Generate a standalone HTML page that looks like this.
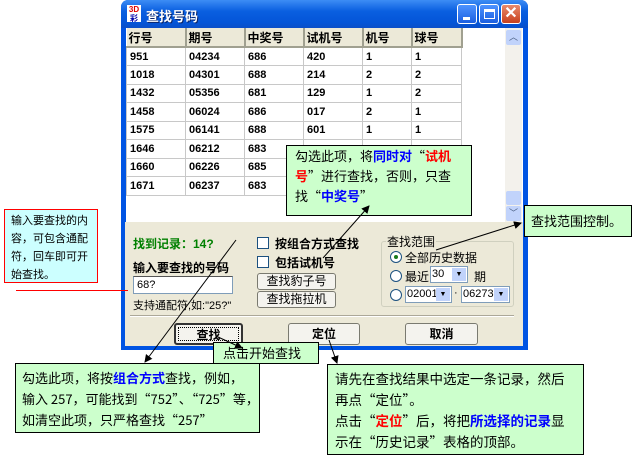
<!DOCTYPE html>
<html><head><meta charset="utf-8"><style>
*{margin:0;padding:0;box-sizing:border-box}
body{width:633px;height:456px;background:#fff;position:relative;overflow:hidden;font-family:"Liberation Sans","Noto Sans CJK SC",sans-serif;font-size:12px;color:#000}
.a{position:absolute}
.win{left:121px;top:0;width:407px;height:350px;background:#0054e3;border-radius:7px 7px 0 0}
.title{left:121px;top:0;width:407px;height:28px;border-radius:7px 7px 0 0;background:linear-gradient(#3d8df5,#0a5fe0 40%,#0455d8 80%,#0a4fc8)}
.tb{width:20px;height:20px;top:4px;border:1px solid #fff;border-radius:3px;background:linear-gradient(#4d93ff,#1c5fe0)}
.grid{left:126px;top:28px;width:397px;height:194px;background:#fff}
table{border-collapse:collapse;position:absolute;left:126px;top:28px;font-weight:bold;font-size:11px;font-family:"Liberation Sans","Noto Sans CJK SC",sans-serif}
td{height:18.5px;border:1px solid #c8c8c8;padding-left:3px;vertical-align:middle}
th{height:19px;background:#ece9d8;border-right:2px solid #a0a090;border-bottom:2px solid #a0a090;text-align:left;padding-left:2px;font-size:12px}
.panel{left:125px;top:222px;width:398px;height:124px;background:#ece9d8}
.btn{background:#f4f3ee;border:1px solid #7a7a70;border-radius:3px;text-align:center;font-size:12px}
.g{background:#ccffcc;border:1px solid #000;font-size:13px;line-height:20px;font-family:"Noto Sans CJK SC",sans-serif}
.b{color:#0000ff;font-weight:bold}.r{color:#ff0000;font-weight:bold}
.cb{width:12px;height:12px;border:1px solid #1c5180;background:#fff}
.rd{width:12px;height:12px;border:1px solid #1c5180;border-radius:50%;background:#fff}
.sel{height:17px;border:1px solid #7f9db9;background:#fff;font-size:11px;padding-left:1px;line-height:15px}
.dd{position:absolute;right:1px;top:1px;width:14px;height:13px;background:#c1d3fb;font-size:7px;text-align:center;line-height:13px}
</style></head><body>
<div class="a win"></div>
<div class="a title"></div>
<div class="a" style="left:127px;top:5px;width:14px;height:17px;background:#fff;font-size:8px;color:#d00;font-weight:bold;line-height:9px;text-align:center">3D<br><span style="color:#00a">彩</span></div>
<div class="a" style="left:146px;top:6px;color:#fff;font-weight:bold;font-size:13px;text-shadow:1px 1px #0a246a">查找号码</div>
<div class="a tb" style="left:457px"><div class="a" style="left:5px;top:12px;width:7px;height:3px;background:#fff"></div></div>
<div class="a tb" style="left:479px"><div class="a" style="left:4px;top:4px;width:11px;height:10px;border:1px solid #fff;border-top-width:3px"></div></div>
<div class="a tb" style="left:501px;background:linear-gradient(#e88a6c,#c8401c);color:#fff;font-weight:bold;font-size:16px;line-height:18px;text-align:center">✕</div>
<div class="a grid"></div>
<table>
<tr><th style="width:59px">行号</th><th style="width:59px">期号</th><th style="width:59px">中奖号</th><th style="width:59px">试机号</th><th style="width:49px">机号</th><th style="width:50px">球号</th></tr>
<tr><td>951</td><td>04234</td><td>686</td><td>420</td><td>1</td><td>1</td></tr>
<tr><td>1018</td><td>04301</td><td>688</td><td>214</td><td>2</td><td>2</td></tr>
<tr><td>1432</td><td>05356</td><td>681</td><td>129</td><td>1</td><td>2</td></tr>
<tr><td>1458</td><td>06024</td><td>686</td><td>017</td><td>2</td><td>1</td></tr>
<tr><td>1575</td><td>06141</td><td>688</td><td>601</td><td>1</td><td>1</td></tr>
<tr><td>1646</td><td>06212</td><td>683</td><td>&nbsp;</td><td>&nbsp;</td><td>&nbsp;</td></tr>
<tr><td>1660</td><td>06226</td><td>685</td><td>&nbsp;</td><td>&nbsp;</td><td>&nbsp;</td></tr>
<tr><td>1671</td><td>06237</td><td>683</td><td>&nbsp;</td><td>&nbsp;</td><td>&nbsp;</td></tr>
</table>
<div class="a" style="left:505px;top:28px;width:17px;height:194px;background:#f3f1ec"></div>
<div class="a" style="left:506px;top:30px;width:15px;height:15px;background:#c1d3fb;border-radius:2px;font-size:9px;text-align:center;color:#4d6185">︿</div>
<div class="a" style="left:506px;top:191px;width:15px;height:14px;background:#c1d3fb;border-radius:2px"></div>
<div class="a" style="left:506px;top:206px;width:15px;height:15px;background:#c1d3fb;border-radius:2px;font-size:9px;text-align:center;color:#4d6185">﹀</div>
<div class="a panel"></div>
<div class="a" style="left:133px;top:235px;color:#008000;font-weight:bold;font-size:12px">找到记录：14?</div>
<div class="a cb" style="left:257px;top:237px"></div><div class="a" style="left:275px;top:235px;font-weight:bold;font-size:12px">按组合方式查找</div>
<div class="a cb" style="left:257px;top:256px"></div><div class="a" style="left:275px;top:254px;font-weight:bold;font-size:12px">包括试机号</div>
<div class="a" style="left:133px;top:259px;font-weight:bold;font-size:12px">输入要查找的号码</div>
<div class="a" style="left:133px;top:276px;width:100px;height:18px;background:#fff;border:1px solid #7f9db9;border-top-color:#555;font-size:11px;padding:2px 3px">68?</div>
<div class="a" style="left:133px;top:297px;font-size:11px">支持通配符,如:"25?"</div>
<div class="a btn" style="left:257px;top:273px;width:79px;height:17px;line-height:15px">查找豹子号</div>
<div class="a btn" style="left:257px;top:291px;width:79px;height:17px;line-height:15px">查找拖拉机</div>
<div class="a" style="left:381px;top:241px;width:133px;height:66px;border:1px solid #d0d0bf;border-radius:3px"></div>
<div class="a" style="left:386px;top:233px;background:#ece9d8;padding:0 1px;font-size:12px">查找范围</div>
<div class="a rd" style="left:390px;top:251px"><div class="a" style="left:3px;top:3px;width:4px;height:4px;border-radius:50%;background:#1a7a1a"></div></div>
<div class="a" style="left:405px;top:249px;font-size:12px">全部历史数据</div>
<div class="a rd" style="left:390px;top:270px"></div>
<div class="a" style="left:405px;top:268px;font-size:12px">最近</div>
<div class="a sel" style="left:430px;top:266px;width:38px">30<div class="dd">▼</div></div>
<div class="a" style="left:474px;top:268px;font-size:12px">期</div>
<div class="a rd" style="left:390px;top:289px"></div>
<div class="a sel" style="left:405px;top:286px;width:47px">02001<div class="dd">▼</div></div>
<div class="a" style="left:454px;top:287px;font-size:11px">·</div>
<div class="a sel" style="left:461px;top:286px;width:49px">06273<div class="dd">▼</div></div>
<div class="a" style="left:130px;top:315px;width:384px;height:2px;border-top:1px solid #aca899;border-bottom:1px solid #fff"></div>
<div class="a btn" style="left:174px;top:323px;width:69px;height:22px;line-height:20px;font-weight:bold;border:2px solid #333;outline:1px dotted #000;outline-offset:-5px">查找</div>
<div class="a btn" style="left:288px;top:323px;width:72px;height:22px;line-height:20px;font-weight:bold">定位</div>
<div class="a btn" style="left:405px;top:323px;width:73px;height:22px;line-height:20px;font-weight:bold">取消</div>

<div class="a g" style="left:286px;top:145px;width:186px;height:71px;padding:0 8px;font-size:13px">勾选此项，将<span class="b">同时对</span>“<span class="r">试机号</span>”进行查找，否则，只查找“<span class="b">中奖号</span>”</div>
<div class="a g" style="left:524px;top:205px;width:108px;height:32px;padding:5px 6px;font-size:13px;white-space:nowrap">查找范围控制。</div>
<div class="a" style="left:4px;top:209px;width:94px;height:74px;background:#ccffff;border:1px solid #ff0000;font-size:11px;line-height:18px;padding:1px 4px 1px 6px;font-family:'Noto Sans CJK SC',sans-serif;word-break:break-all">输入要查找的内容，可包含通配符，回车即可开始查找。</div>
<div class="a" style="left:16px;top:290px;width:112px;height:1px;background:#ff0000"></div>
<div class="a g" style="left:213px;top:342px;width:106px;height:22px;padding:0 9px;line-height:20px">点击开始查找</div>
<div class="a g" style="left:15px;top:363px;width:245px;height:70px;padding:3px 6px;line-height:21px;font-size:13px;white-space:nowrap">勾选此项，将按<span class="b">组合方式</span>查找，例如，<br>输入 257，可能找到“752”、“725”等，<br>如清空此项，只严格查找“257”</div>
<div class="a g" style="left:327px;top:364px;width:257px;height:91px;padding:3px 7px;line-height:21px;font-size:13.5px">请先在查找结果中选定一条记录，然后再点“定位”。<br>点击“<span class="r">定位</span>”后，将把<span class="b">所选择的记录</span>显示在“历史记录”表格的顶部。</div>
<svg class="a" style="left:0;top:0" width="633" height="456">
<defs><marker id="m" markerWidth="8" markerHeight="8" refX="7" refY="4" orient="auto"><path d="M0,0 L8,4 L0,8z" fill="#000"/></marker></defs>
<g stroke="#000" stroke-width="1" fill="none">
<line x1="323" y1="258" x2="369" y2="206" marker-end="url(#m)"/>
<line x1="236" y1="240" x2="145" y2="362" marker-end="url(#m)"/>
<line x1="436" y1="250" x2="521" y2="223" marker-end="url(#m)"/>
<line x1="218" y1="337" x2="242" y2="348" marker-end="url(#m)"/>
<line x1="329" y1="340" x2="337" y2="363" marker-end="url(#m)"/>
</g></svg>
</body></html>
